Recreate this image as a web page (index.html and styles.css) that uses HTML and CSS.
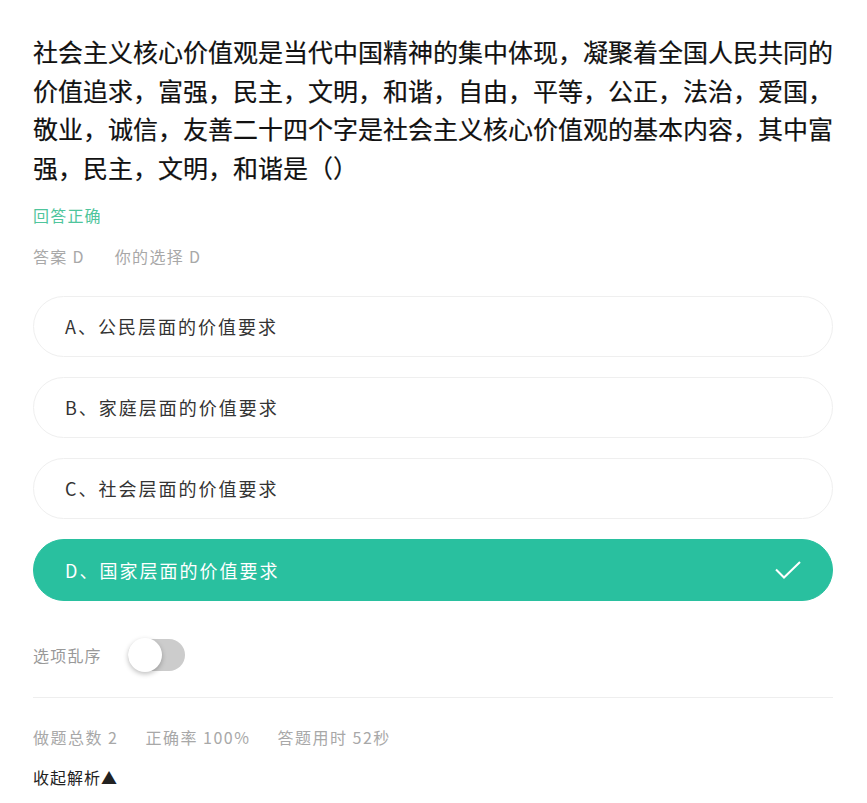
FILE: index.html
```html
<!DOCTYPE html>
<html lang="zh-CN">
<head>
<meta charset="utf-8">
<link rel="stylesheet" href="styles.css">
</head>
<body>
<div class="page">
  <h1 class="question">社会主义核心价值观是当代中国精神的集中体现，凝聚着全国人民共同的价值追求，富强，民主，文明，和谐，自由，平等，公正，法治，爱国，敬业，诚信，友善二十四个字是社会主义核心价值观的基本内容，其中富强，民主，文明，和谐是（）</h1>
  <div class="result">回答正确</div>
  <div class="answer"><span>答案 D</span><span>你的选择 D</span></div>
  <ul class="options">
    <li class="option">A、公民层面的价值要求</li>
    <li class="option">B、家庭层面的价值要求</li>
    <li class="option">C、社会层面的价值要求</li>
    <li class="option selected">D、国家层面的价值要求
      <svg class="check" width="28" height="20" viewBox="0 0 28 20"><path d="M2 9.5 L10 17.5 L26 2" fill="none" stroke="#fff" stroke-width="2"/></svg>
    </li>
  </ul>
  <div class="shuffle">
    <span>选项乱序</span>
    <span class="toggle"><span class="knob"></span></span>
  </div>
  <div class="stats"><span>做题总数 2</span><span>正确率 100%</span><span>答题用时 52秒</span></div>
  <div class="collapse">收起解析▲</div>
</div>
</body>
</html>
```
FILE: styles.css
```css
html, body { margin: 0; padding: 0; background: #fff; }
body { font-family: "Noto Sans CJK SC", "Noto Sans", sans-serif; }
.page { padding: 32px 34px 0 33px; width: 800px; }
.question { margin: 0; font-size: 25px; line-height: 38.7px; font-weight: 400; color: #111; -webkit-text-stroke: 0.2px #111; }
.result { margin-top: 16px; font-size: 16px; line-height: 24px; letter-spacing: 1.2px; color: #4fc59c; }
.answer { margin-top: 17px; font-size: 16px; line-height: 24px; letter-spacing: 1.3px; color: #a8a8a8; display: flex; gap: 30px; }
.options { list-style: none; margin: 28px 0 0; padding: 0; display: flex; flex-direction: column; gap: 20px; }
.option { height: 61px; box-sizing: border-box; border: 1px solid #efefef; border-radius: 31px; padding: 0 30px 0 31px; display: flex; align-items: center; justify-content: space-between; font-size: 18px; letter-spacing: 2px; color: #333; }
.option.selected { background: #29c09f; border-color: #29c09f; color: #fff; height: 62px; }
.shuffle { margin-top: 37px; display: flex; align-items: center; gap: 26px; font-size: 16px; letter-spacing: 1.2px; color: #999; height: 34px; }
.toggle { width: 57px; height: 32px; border-radius: 16px; background: #cccccc; display: flex; align-items: center; }
.knob { width: 34px; height: 34px; border-radius: 50%; background: #fff; box-shadow: 0 2px 5px rgba(0,0,0,0.25); }
.stats { margin-top: 25px; border-top: 1px solid #eee; padding-top: 27px; display: flex; gap: 27px; font-size: 16px; line-height: 24px; letter-spacing: 1.5px; color: #a8a8a8; }
.collapse { margin-top: 16px; font-size: 16px; line-height: 24px; letter-spacing: 1px; color: #222; }
```
